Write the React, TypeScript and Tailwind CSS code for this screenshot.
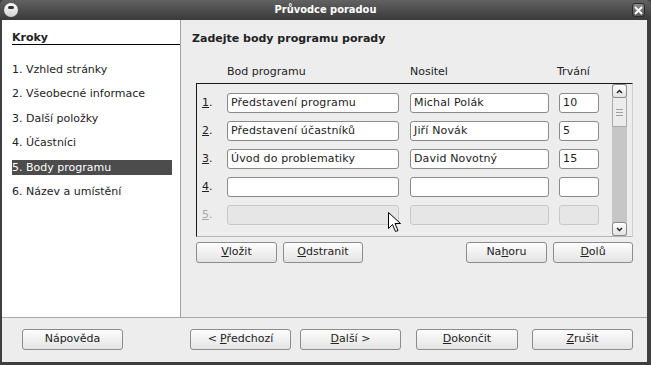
import React from "react";

const font = { fontFamily: '"DejaVu Sans", Verdana, sans-serif' };

function Btn({ children, className = "" }: { children: React.ReactNode; className?: string }) {
  return (
    <div
      className={`flex h-[21px] items-center justify-center rounded-[3px] border border-[#8c8c8c] bg-gradient-to-b from-[#fdfdfd] to-[#e4e4e4] text-[11px] text-[#222] ${className}`}
    >
      {children}
    </div>
  );
}

function Field({ value, w, disabled }: { value?: string; w: string; disabled?: boolean }) {
  return (
    <div
      className={`flex h-[20px] items-center rounded-[3px] border px-[3px] text-[11px] tracking-[0.15px] ${w} ${
        disabled ? "border-[#c9c9c9] bg-[#e6e6e6]" : "border-[#8a8a8a] bg-white text-[#222]"
      }`}
    >
      {value}
    </div>
  );
}

const rows = [
  ["Představení programu", "Michal Polák", "10"],
  ["Představení účastníků", "Jiří Novák", "5"],
  ["Úvod do problematiky", "David Novotný", "15"],
  ["", "", ""],
];

const steps = [
  "1. Vzhled stránky",
  "2. Všeobecné informace",
  "3. Další položky",
  "4. Účastníci",
  "5. Body programu",
  "6. Název a umístění",
];

export default function App() {
  return (
    <div className="relative flex h-[365px] w-[651px] flex-col overflow-hidden bg-[#3f3f3f]" style={font}>
      {/* title bar */}
      <div className="relative flex h-[20px] items-center justify-center rounded-t-[5px] bg-gradient-to-b from-[#626262] to-[#3a3a3a]">
        <div className="absolute left-[4px] top-[3px] flex h-[14px] w-[14px] items-center justify-center rounded-full bg-gradient-to-b from-white to-[#cfcfcf]">
          <div className="mb-[5px] h-[3px] w-[6px] rounded-full bg-[#333]" />
        </div>
        <span className="font-['DejaVu_Sans_Condensed','DejaVu_Sans',sans-serif] text-[11px] font-bold text-white">
          Průvodce poradou
        </span>
        <div className="absolute right-[6px] top-[3px] flex h-[14px] w-[13px] items-center justify-center rounded-[3px] border border-[#2a2a2a] bg-gradient-to-b from-[#8a8a8a] to-[#5a5a5a]">
          <svg width="9" height="9" viewBox="0 0 9 9">
            <path d="M1 1L8 8M8 1L1 8" stroke="white" strokeWidth="2" />
          </svg>
        </div>
      </div>

      {/* body */}
      <div className="ml-[2px] mr-[4px] mb-[3px] flex flex-1 flex-col bg-[#ededed]">
        <div className="flex h-[298px] border-b border-[#a8a8a8]">
          {/* steps */}
          <div className="w-[179px] border-r border-[#a0a0a0] bg-white pl-[10px] text-[11px] text-[#222]">
            <div className="mt-[11px] h-[14px] border-b border-black font-bold leading-[13px]">Kroky</div>
            <div className="mt-[17px] flex flex-col gap-[9.4px] pr-[8px]">
              {steps.map((s, i) => (
                <div
                  key={s}
                  className={`h-[15px] leading-[15px] ${i === 4 ? "bg-[#4c4c4c] text-white" : ""}`}
                >
                  {s}
                </div>
              ))}
            </div>
          </div>

          {/* content */}
          <div className="flex flex-1 flex-col">
            <div className="mt-[12px] pl-[11px] text-[11px] font-bold leading-[14px] text-[#222]">
              Zadejte body programu porady
            </div>
            <div className="ml-[15px] w-[437px]">
              <div className="mt-[19px] flex h-[14px] pl-[31px] text-[11px] leading-[14px] text-[#222]">
                <span className="w-[183px]">Bod programu</span>
                <span className="w-[147px]">Nositel</span>
                <span>Trvání</span>
              </div>
              <div className="mt-[4px] flex h-[154px] border border-t-[#1a1a1a] border-l-[#1a1a1a] border-r-[#cfcfcf] border-b-[#b5b5b5]">
                <div className="flex flex-1 flex-col gap-[8px] pt-[9px]">
                  {rows.map((r, i) => (
                    <div key={i} className="flex items-center">
                      <span className="w-[30px] pl-[5px] text-[11px] text-[#222]">
                        <span className="underline">{i + 1}</span>.
                      </span>
                      <Field value={r[0]} w="w-[172px]" />
                      <Field value={r[1]} w="ml-[11px] w-[139px]" />
                      <Field value={r[2]} w="ml-[10px] w-[40px]" />
                    </div>
                  ))}
                  <div className="flex items-center">
                    <span className="w-[30px] pl-[5px] text-[11px] text-[#a8a8a8]">
                      <span className="underline">5</span>.
                    </span>
                    <Field w="w-[172px]" disabled />
                    <Field w="ml-[11px] w-[139px]" disabled />
                    <Field w="ml-[10px] w-[40px]" disabled />
                  </div>
                </div>
                {/* scrollbar */}
                <div className="mr-[5px] flex w-[15px] flex-col bg-[#c6c6c6]">
                  <div className="flex h-[14px] items-center justify-center rounded-[3px] border border-[#8a8a8a] bg-gradient-to-b from-white to-[#e2e2e2]">
                    <svg width="7" height="5" viewBox="0 0 7 5">
                      <path d="M1 4L3.5 1.5L6 4" stroke="#222" strokeWidth="1.5" fill="none" />
                    </svg>
                  </div>
                  <div className="flex h-[29px] flex-col items-center justify-center gap-[2px] border-x border-b border-[#a9a9a9] bg-[#ececec]">
                    <div className="h-px w-[7px] bg-[#a0a0a0]" />
                    <div className="h-px w-[7px] bg-[#a0a0a0]" />
                    <div className="h-px w-[7px] bg-[#a0a0a0]" />
                  </div>
                  <div className="flex-1" />
                  <div className="flex h-[14px] items-center justify-center rounded-[3px] border border-[#8a8a8a] bg-gradient-to-b from-white to-[#e2e2e2]">
                    <svg width="7" height="5" viewBox="0 0 7 5">
                      <path d="M1 1L3.5 3.5L6 1" stroke="#222" strokeWidth="1.5" fill="none" />
                    </svg>
                  </div>
                </div>
              </div>
              <div className="mt-[5px] flex justify-between">
                <div className="flex gap-[6px]">
                  <Btn className="w-[81px]">
                    <span className="underline">V</span>ložit
                  </Btn>
                  <Btn className="w-[80px]">
                    <span className="underline">O</span>dstranit
                  </Btn>
                </div>
                <div className="flex gap-[6px]">
                  <Btn className="w-[81px]">
                    Na<span className="underline">h</span>oru
                  </Btn>
                  <Btn className="w-[80px]">
                    <span className="underline">D</span>olů
                  </Btn>
                </div>
              </div>
            </div>
          </div>
        </div>

        {/* bottom buttons */}
        <div className="flex pt-[11px]">
          <Btn className="ml-[20px] w-[101px]">Nápověda</Btn>
          <Btn className="ml-[67px] w-[101px]">
            &lt; <span className="ml-[3px] underline">P</span>ředchozí
          </Btn>
          <Btn className="ml-[9px] w-[101px]">
            <span className="underline">D</span>alší &gt;
          </Btn>
          <Btn className="ml-[15px] w-[102px]">
            <span className="underline">D</span>okončit
          </Btn>
          <Btn className="ml-[14px] w-[101px]">
            <span className="underline">Z</span>rušit
          </Btn>
        </div>
      </div>

      {/* mouse pointer */}
      <svg className="absolute left-[388px] top-[212px]" width="13" height="21" viewBox="0 0 13 21">
        <path d="M0.5 0.5L0.5 16.5L4.5 12.5L7.5 19.5L10 18.5L7 11.5L12.5 11.5Z" fill="white" stroke="black" strokeWidth="1" strokeLinejoin="round" />
      </svg>
    </div>
  );
}
